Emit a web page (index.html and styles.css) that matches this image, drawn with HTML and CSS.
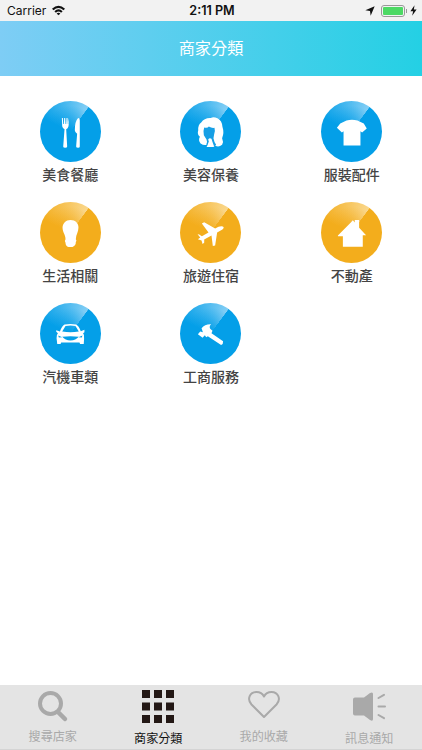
FILE: index.html
```html
<!DOCTYPE html>
<html lang="zh-Hant">

<head>
	<meta charset="UTF-8">
	<meta name="viewport" content="width=device-width, initial-scale=1.0">
	<title>商家分類</title>
	<link rel="stylesheet" href="styles.css">
</head>

<body>
	<div class="status-bar">
		<div class="status-left">
			<span>Carrier</span>
			<svg class="wifi" viewBox="0 0 42 32">
				<path d="M2 11 Q21 -7 40 11 L35.500 15.500 Q21 2 6.500 15.500 Z" />
				<path d="M9 18 Q21 7 33 18 L28.500 22.500 Q21 16 13.500 22.500 Z" />
				<path d="M15.500 24.500 Q21 20 26.500 24.500 L21 30 Z" />
			</svg>
		</div>
		<div class="status-time">2:11 PM</div>
		<div class="status-right">
			<svg class="location" viewBox="0 0 30 30"><path d="M29 1 L17 29 L15 15 L1 13 Z" /></svg>
			<div class="battery"></div>
			<svg class="bolt" viewBox="0 0 18 32"><path d="M12 1 L0 18 H8 L5 31 L18 13 H10 Z" /></svg>
		</div>
	</div>

	<header class="header">
		<h1>商家分類</h1>
	</header>

	<main class="categories">
		<a class="category">
			<div class="circle blue">
				<svg viewBox="0 0 184 184">
					<path d="M66 51 H69 L70 69 H72 L73 51 H76 L77 69 H79 L80 51 H83 L84 69 H85 L86 51 Q89 65 86 76 Q84 83 79 85 L82 137 Q82 141 76 141 Q70 141 70 137 L74 85 Q68 82 67 76 Z" />
					<path d="M115 51 Q120 51 120 58 V137 Q120 141 115 141 Q109 141 109 137 L112 99 Q106 96 105 88 Q105 61 115 51 Z" />
				</svg>
			</div>
			<span>美食餐廳</span>
		</a>
		<a class="category">
			<div class="circle blue">
				<svg viewBox="0 0 184 184">
					<path d="M62 128 Q54 119 60 108 Q51 100 55 88 Q54 72 64 65 Q73 50 93 51 Q101 46 113 52 Q127 59 128 78 Q134 96 127 112 Q132 122 127 132 Q116 141 106 134 L101 139 H80 L84 131 Q73 136 62 128 Z" />
					<path class="hair-gap" d="M73 80 Q83 83 87 77 Q96 83 104 81 Q107 91 103 100 L101 112 Q103 124 109 132 L103 137 L98 124 L95 114 Q89 110 85 116 L87 122 L83 133 L79 132 Q84 124 80 116 L72 103 Q69 91 73 80 Z" />
				</svg>
			</div>
			<span>美容保養</span>
		</a>
		<a class="category">
			<div class="circle blue">
				<svg viewBox="0 0 184 184">
					<path d="M77 59 Q93 54 110 59 L129 68 L138 83 L124 95 L119 91 V134 H68 V91 L63 95 L48 81 L58 68 Z" />
				</svg>
			</div>
			<span>服裝配件</span>
		</a>
		<a class="category">
			<div class="circle yellow">
				<svg viewBox="0 0 184 184">
					<path d="M92 54 C107 54 117 64 116 78 C116 90 109 98 108 112 Q112 116 108 121 Q109 131 98 136 H86 Q77 133 77 123 Q73 117 77 112 C77 100 68 91 68 78 C68 64 78 54 92 54 Z" />
				</svg>
			</div>
			<span>生活相關</span>
		</a>
		<a class="category">
			<div class="circle yellow">
				<svg viewBox="0 0 184 184">
					<path d="M53 97 L58 98 L66 103 L86 92 L66 65 L73 61 L106 80 Q121 71 129 74 Q135 77 128 83 L112 92 L106 131 L99 133 L95 101 L73 113 V123 L68 127 L65 116 L54 112 L61 107 Z" />
				</svg>
			</div>
			<span>旅遊住宿</span>
		</a>
		<a class="category">
			<div class="circle yellow">
				<svg viewBox="0 0 184 184">
					<path d="M51 101 L90 62 L96 55 L102 62 V54 H115 V78 L136 100 H126 V135 H66 V103 H51 Z" />
				</svg>
			</div>
			<span>不動產</span>
		</a>
		<a class="category">
			<div class="circle blue">
				<svg viewBox="0 0 184 184">
					<path fill-rule="evenodd" d="M74 65 Q92 62 109 65 Q117 69 123 85 L134 81 V88 L130 91 Q135 96 133 108 L132 124 H121 L119 119 H64 L62 124 H52 L50 106 Q49 96 54 91 L49 87 V82 L60 86 Q66 70 74 65 Z M77 69 L67 86 Q92 91 117 86 L107 69 Q92 66 77 69 Z M55 98 L57 104 L67 103 Z M128 98 L116 103 L126 104 Z M67 102 Q92 99 117 102 Q108 113 92 113 Q76 113 67 102 Z" />
				</svg>
			</div>
			<span>汽機車類</span>
		</a>
		<a class="category">
			<div class="circle blue">
				<svg viewBox="0 0 184 184">
					<path d="M65 76 Q75 63 94 64 Q87 70 91 78 L98 84 L95 91 L130 115 Q131 123 124 127 L84 100 L79 103 L75 97 L68 105 L54 94 L61 86 L69 88 Z" />
				</svg>
			</div>
			<span>工商服務</span>
		</a>
	</main>

	<nav class="tab-bar">
		<a class="tab">
			<svg viewBox="0 0 34 34">
				<circle cx="14.500" cy="13.500" r="10.500" fill="none" stroke="currentColor" stroke-width="4" />
				<path d="M22 22 L29 29" fill="none" stroke="currentColor" stroke-width="4.500" stroke-linecap="round" />
			</svg>
			<span>搜尋店家</span>
		</a>
		<a class="tab tab-low active">
			<svg viewBox="0 0 34 34">
				<path d="M1 0h8v8h-8zM13 0h8v8h-8zM25 0h8v8h-8zM1 12.500h8v8h-8zM13 12.500h8v8h-8zM25 12.500h8v8h-8zM1 25h8v8h-8zM13 25h8v8h-8zM25 25h8v8h-8z" />
			</svg>
			<span>商家分類</span>
		</a>
		<a class="tab">
			<svg viewBox="0 0 34 34">
				<path d="M17 27 L4.500 14.500 C-0.500 9 3 2 9.500 2 C13.500 2 16 4.500 17 6.500 C18 4.500 20.500 2 24.500 2 C31 2 34.500 9 29.500 14.500 Z" fill="none" stroke="currentColor" stroke-width="2" stroke-linejoin="round" />
			</svg>
			<span>我的收藏</span>
		</a>
		<a class="tab tab-low">
			<svg viewBox="0 0 34 34">
				<path d="M3 7.500 H12 L18 3 Q21 1.500 21 4 V29 Q21 32 18 30 L12 25.500 H3 Q1 25.500 1 23.500 V9.500 Q1 7.500 3 7.500 Z" />
				<path d="M26.500 8 L32 4.800 M26.500 16.500 H33 M26.500 25 L32 28.200" fill="none" stroke="currentColor" stroke-width="2" stroke-linecap="round" />
			</svg>
			<span>訊息通知</span>
		</a>
	</nav>
</body>

</html>
```
FILE: styles.css
```css
* {
	box-sizing: border-box;
}

body {
	display: flex;
	flex-direction: column;
	height: 100vh;
	margin: 0;
	background-color: #fff;
	font-family: "Noto Sans CJK TC", sans-serif;
	overflow: hidden;
}

svg {
	display: block;
	fill: currentColor;
}

.status-bar {
	display: grid;
	grid-template-columns: 1fr auto 1fr;
	align-items: center;
	height: 21px;
	padding: 0 5px 0 7px;
	background-color: #f2f2f2;
	color: #111;
	font-family: Inter, sans-serif;
	font-size: 12px;
}

.status-left,
.status-right {
	display: flex;
	align-items: center;
}

.status-left {
	gap: 5px;
}

.status-right {
	justify-content: flex-end;
}

.wifi {
	width: 15px;
	height: 11px;
}

.status-time {
	font-size: 12.6px;
	font-weight: 600;
}

.location {
	width: 10px;
	height: 10px;
	margin-right: 6px;
}

.battery {
	position: relative;
	width: 24px;
	height: 12px;
	margin-right: 5px;
	padding: 1px;
	border: 1px solid #999;
	border-radius: 3px;
	background: #4cd964 content-box;
}

.battery::after {
	content: "";
	position: absolute;
	top: 3px;
	right: -3px;
	width: 1px;
	height: 4px;
	background-color: #999;
}

.bolt {
	width: 7px;
	height: 11px;
}

.header {
	display: flex;
	align-items: center;
	justify-content: center;
	height: 55px;
	padding-bottom: 4px;
	background: linear-gradient(to right, #7ecdf5, #24d0e4);
}

.header h1 {
	margin: 0;
	color: #fff;
	font-size: 16.2px;
	font-weight: 400;
	line-height: 24px;
}

.categories {
	display: grid;
	grid-template-columns: repeat(3, 1fr);
	grid-auto-rows: 101px;
	flex: 1;
	padding-top: 25px;
}

.category {
	display: flex;
	flex-direction: column;
	align-items: center;
	color: #444;
	font-size: 14px;
	font-weight: 500;
	line-height: 20px;
}

.circle {
	width: 61px;
	height: 61px;
	margin-bottom: 2px;
	border-radius: 50%;
	color: #fff;
}

/* glossy wedge, brightest at its right edge and faded out at the centre */
.blue {
	background:
		radial-gradient(circle closest-side, #049fe8 5%, rgba(4, 159, 232, 0) 85%),
		conic-gradient(from -65deg, #049fe8, #83cef5 101deg, #049fe8 102deg);
}

.yellow {
	background:
		radial-gradient(circle closest-side, #f3ad1c 5%, rgba(243, 173, 28, 0) 85%),
		conic-gradient(from -65deg, #f3ad1c, #fad78c 101deg, #f3ad1c 102deg);
}

.hair-gap {
	fill: #169fe5;
}

.tab-bar {
	display: grid;
	grid-template-columns: repeat(4, 1fr);
	height: 65px;
	border-bottom: 1px solid #d4d4d4;
	background-color: #e4e4e4;
}

.tab {
	display: flex;
	flex-direction: column;
	align-items: center;
	padding-top: 5px;
	color: #a9a9a9;
	font-size: 12.1px;
	line-height: 18px;
}

.tab svg {
	width: 34px;
	height: 34px;
	margin-bottom: 3px;
}

.tab-low svg {
	margin-bottom: 5px;
}

.active {
	color: #231815;
}

.active span {
	color: #111;
}
```
